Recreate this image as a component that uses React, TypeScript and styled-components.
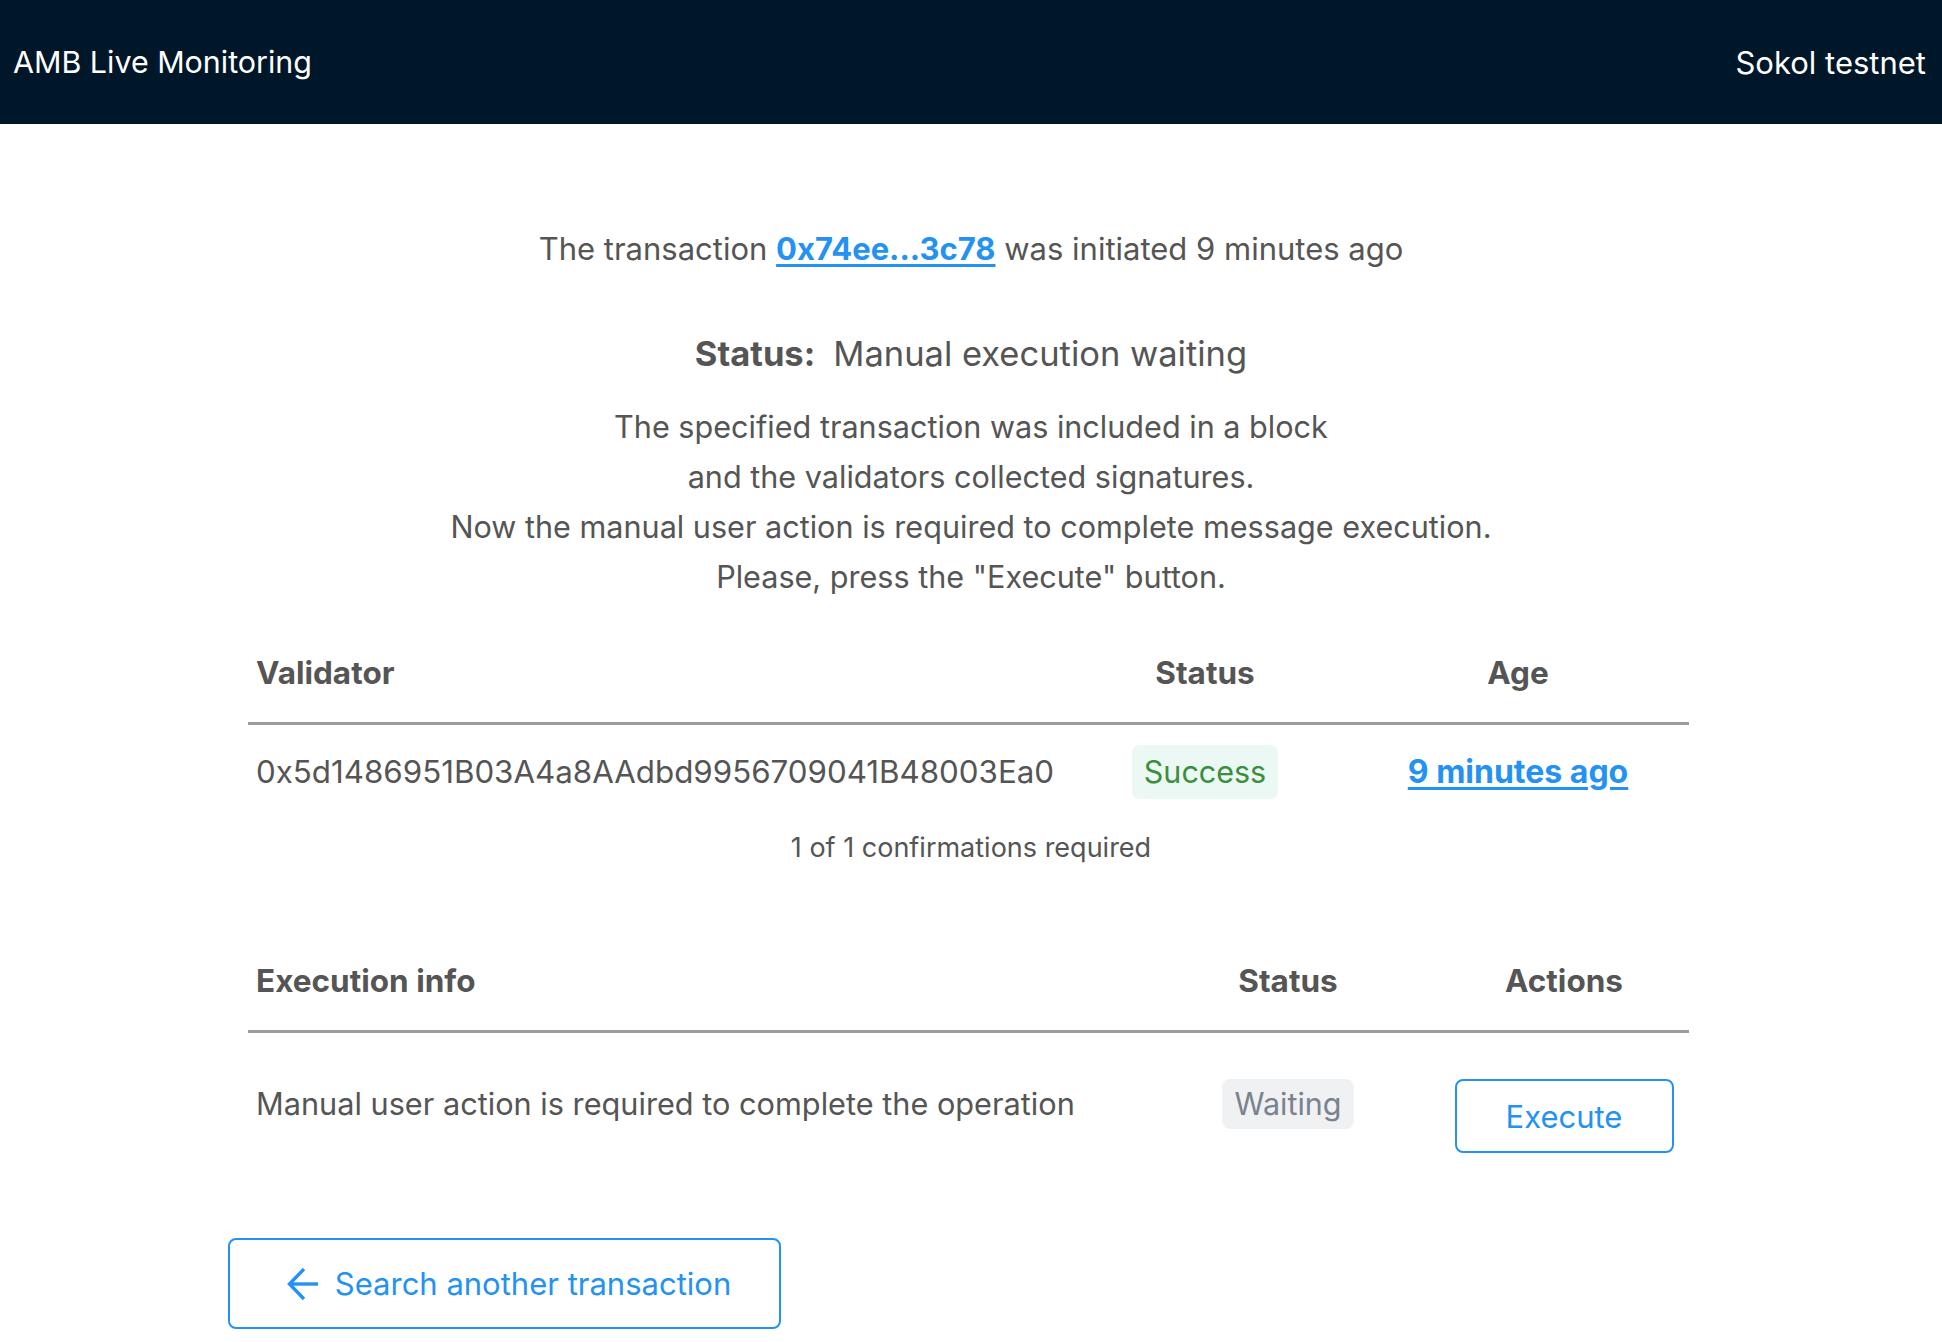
import React from "react";
import styled, { createGlobalStyle } from "styled-components";

const GlobalStyle = createGlobalStyle`
  html, body {
    margin: 0;
    padding: 0;
    background: #ffffff;
  }
  body {
    font-family: Inter, "Noto Sans", "Liberation Sans", sans-serif;
    color: #555555;
  }
`;

const HeaderBar = styled.header`
  height: 124px;
  background: #001629;
  display: flex;
  align-items: center;
  justify-content: space-between;
  padding: 0 16px 0 13px;
  box-sizing: border-box;
  color: #ffffff;
  font-weight: 400;
`;

const HeaderText = styled.span<{ $size: number }>`
  line-height: 1;
  font-size: ${(p) => p.$size}px;
`;

const Main = styled.main`
  width: 1486px;
  margin: 0 auto;
  padding-top: 100px;
  padding-bottom: 40px;
  display: flex;
  flex-direction: column;
  align-items: stretch;
  box-sizing: border-box;
`;

const Centered = styled.p<{ $size: number; $gap: number }>`
  margin: ${(p) => p.$gap}px 0 0 0;
  text-align: center;
  font-size: ${(p) => p.$size}px;
  line-height: 50px;
  color: #555555;
`;

const TxLink = styled.a`
  color: #2492f3;
  font-weight: 700;
  text-decoration: underline;
  text-underline-offset: 4px;
`;

const StatusLabel = styled.strong`
  font-weight: 700;
  margin-right: 18px;
`;

const Table = styled.section<{ $cols: string; $gap: number }>`
  margin: ${(p) => p.$gap}px 20px 0 20px;
  width: 1441px;
  display: grid;
  grid-template-columns: ${(p) => p.$cols};
`;

const HeadCell = styled.div<{ $align?: string }>`
  height: 100px;
  display: flex;
  align-items: center;
  justify-content: ${(p) => p.$align || "center"};
  padding: 0 8px;
  font-size: 31.5px;
  font-weight: 700;
  color: #555555;
  border-bottom: 3px solid #9c9c9c;
`;

const BodyCell = styled.div<{ $align?: string; $pad: string; $valign?: string; $size?: number }>`
  display: flex;
  align-items: ${(p) => p.$valign || "center"};
  justify-content: ${(p) => p.$align || "center"};
  padding: ${(p) => p.$pad};
  font-size: ${(p) => p.$size || 31}px;
  line-height: 50px;
  color: #555555;
`;

const Badge = styled.span<{ $kind: "success" | "waiting" }>`
  display: inline-flex;
  align-items: center;
  justify-content: center;
  height: ${(p) => (p.$kind === "success" ? 54 : 50)}px;
  padding: 0 12px;
  border-radius: 8px;
  font-size: 30.5px;
  background: ${(p) => (p.$kind === "success" ? "#ebf8f4" : "#f0f1f3")};
  color: ${(p) => (p.$kind === "success" ? "#3a8f3c" : "#7a838d")};
`;

const AgeLink = styled.a`
  color: #2492f3;
  font-weight: 700;
  font-size: 32px;
  text-decoration: underline;
  text-underline-offset: 4px;
`;

const Confirmations = styled.div`
  margin-top: 7px;
  text-align: center;
  font-size: 27px;
  line-height: 40px;
  color: #555555;
`;

const OutlineButton = styled.button<{ $w: number; $h: number; $shift?: number }>`
  width: ${(p) => p.$w}px;
  height: ${(p) => p.$h}px;
  display: inline-flex;
  align-items: center;
  justify-content: center;
  gap: 17px;
  background: #ffffff;
  border: 2px solid #2492f3;
  border-radius: 8px;
  color: #2492f3;
  font-family: Inter, "Noto Sans", "Liberation Sans", sans-serif;
  font-size: 31px;
  cursor: pointer;
  padding: 0 0 0 ${(p) => p.$shift || 0}px;
  box-sizing: border-box;
`;

const BackRow = styled.div`
  margin-top: 85px;
  display: flex;
`;

const ArrowIcon = () => (
  <svg width="32" height="34" viewBox="0 0 32 34" fill="none" stroke="#2492f3" strokeWidth="3.4" strokeLinecap="butt" strokeLinejoin="miter">
    <path d="M18 2 L3.5 17 L18 32" />
    <path d="M3.5 17 H32" />
  </svg>
);

export default function App() {
  return (
    <>
      <GlobalStyle />
      <HeaderBar>
        <HeaderText $size={30.4}>AMB Live Monitoring</HeaderText>
        <HeaderText $size={31}>Sokol testnet</HeaderText>
      </HeaderBar>
      <Main>
        <Centered $size={31} $gap={0}>
          The transaction <TxLink href="#">0x74ee...3c78</TxLink> was initiated 9 minutes ago
        </Centered>
        <Centered $size={34.5} $gap={55}>
          <StatusLabel>Status:</StatusLabel>Manual execution waiting
        </Centered>
        <Centered $size={30.6} $gap={23}>
          The specified transaction was included in a block
          <br />
          and the validators collected signatures.
          <br />
          Now the manual user action is required to complete message execution.
          <br />
          Please, press the "Execute" button.
        </Centered>

        <Table $cols="815px 284px 342px" $gap={20}>
          <HeadCell $align="flex-start">Validator</HeadCell>
          <HeadCell>Status</HeadCell>
          <HeadCell>Age</HeadCell>
          <BodyCell $align="flex-start" $pad="20px 8px 22px" $size={31.3}>
            0x5d1486951B03A4a8AAdbd9956709041B48003Ea0
          </BodyCell>
          <BodyCell $pad="20px 8px 22px">
            <Badge $kind="success">Success</Badge>
          </BodyCell>
          <BodyCell $pad="20px 8px 22px">
            <AgeLink href="#">9 minutes ago</AgeLink>
          </BodyCell>
        </Table>
        <Confirmations>1 of 1 confirmations required</Confirmations>

        <Table $cols="889px 302px 250px" $gap={62}>
          <HeadCell $align="flex-start">Execution info</HeadCell>
          <HeadCell>Status</HeadCell>
          <HeadCell>Actions</HeadCell>
          <BodyCell $align="flex-start" $valign="flex-start" $pad="46px 8px 0" $size={30.7}>
            Manual user action is required to complete the operation
          </BodyCell>
          <BodyCell $valign="flex-start" $pad="46px 8px 0">
            <Badge $kind="waiting">Waiting</Badge>
          </BodyCell>
          <BodyCell $valign="flex-start" $pad="46px 8px 0">
            <OutlineButton $w={219} $h={74}>Execute</OutlineButton>
          </BodyCell>
        </Table>

        <BackRow>
          <OutlineButton $w={553} $h={91} $shift={8}>
            <ArrowIcon />
            Search another transaction
          </OutlineButton>
        </BackRow>
      </Main>
    </>
  );
}
